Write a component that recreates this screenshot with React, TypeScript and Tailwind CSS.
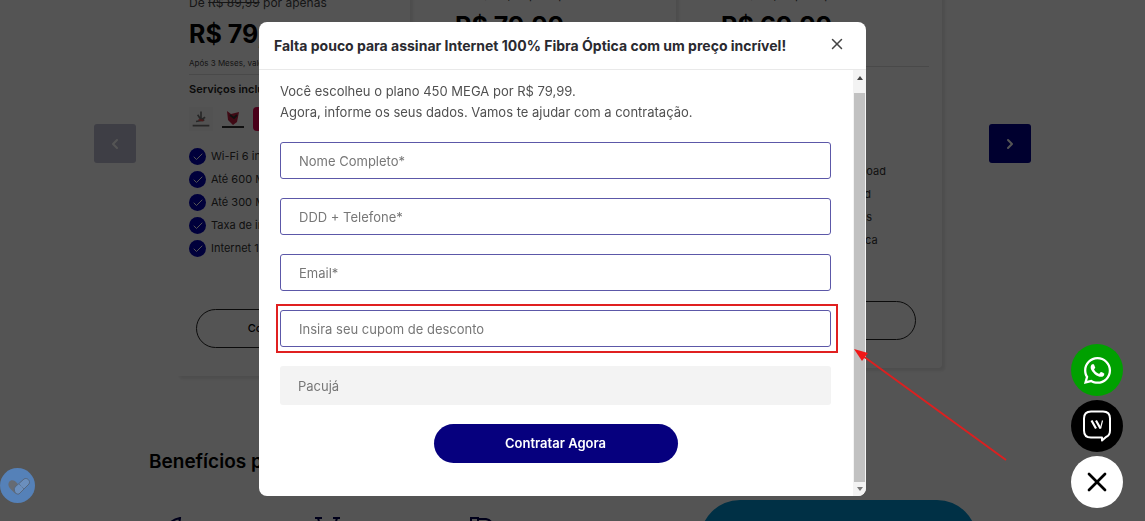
import clsx from "clsx";
import { Check, ChevronLeft, ChevronRight, X } from "lucide-react";
import { FaWhatsapp } from "react-icons/fa";

type Plan = {
  id: string;
  oldPrice: string;
  price: string;
  download: string;
  upload: string;
  featured?: boolean;
};

const plans: Plan[] = [
  { id: "450", oldPrice: "R$ 89,99", price: "R$ 79,99", download: "600", upload: "300", featured: true },
  { id: "600", oldPrice: "R$ 89,99", price: "R$ 79,99", download: "600", upload: "300" },
  { id: "700", oldPrice: "R$ 99,99", price: "R$ 69,99", download: "700", upload: "350" },
];

const fields = [
  { id: "nome", label: "Nome Completo*", type: "text" },
  { id: "telefone", label: "DDD + Telefone*", type: "tel" },
  { id: "email", label: "Email*", type: "email" },
  { id: "cupom", label: "Insira seu cupom de desconto", type: "text", highlighted: true },
];

const PlanCard = ({ plan }: { plan: Plan }) => {
  const benefits = [
    "Wi-Fi 6 incluso",
    `Até ${plan.download} Mega de download`,
    `Até ${plan.upload} Mega de upload`,
    "Taxa de instalação grátis",
    "Internet 100% fibra óptica",
  ];

  return (
    <article
      className={clsx(
        "w-[234px] shrink-0 rounded-sm bg-white px-[13px] pb-7 shadow-[3px_3px_3px_#e8e8e8]",
        !plan.featured && "-mt-2",
      )}
    >
      <p className="text-[12px] leading-[22px] whitespace-nowrap text-[#444]">
        De <s>{plan.oldPrice}</s> por apenas
      </p>
      <p className="text-[25px] leading-[40px] font-bold text-black">{plan.price}</p>
      <p className="text-[8px] leading-[18px] text-[#444]">Após 3 Meses, valor de R$ 99,99</p>
      <hr className="mt-[2px] border-[#ddd]" />
      <h3 className="text-[11px] leading-7 font-semibold text-[#222]">Serviços inclusos:</h3>
      <div className="mt-1 flex h-6 gap-2">
        <div className="flex w-6 items-center justify-center bg-[#f8f8f8]">
          <svg viewBox="0 0 24 24" className="size-5" fill="none" stroke="#777" strokeWidth="2">
            <path d="M12 3v10M8 7l4 6 5-3M6 15l10-2M2 20h20" />
            <path d="M9 13l6 1" stroke="#e05050" />
          </svg>
        </div>
        <div className="flex w-6 items-center justify-center">
          <svg viewBox="0 0 24 24" className="size-6">
            <path d="M6 4l4 3 8-2-2 10-4 3-5-5z" fill="#c02040" />
            <path d="M9 8l4 3 3-3M1 20h22" stroke="#333" strokeWidth="2" fill="none" />
          </svg>
        </div>
        <div className="w-6 rounded bg-[#e0004c]" />
      </div>
      <ul className="mt-[14px] flex flex-col">
        {benefits.map((benefit) => (
          <li key={benefit} className="flex h-[23px] items-center gap-[5px] text-[11px] whitespace-nowrap text-[#333]">
            <span className="flex size-[17px] shrink-0 items-center justify-center rounded-full bg-[#0000b4]">
              <Check className="size-3 text-white" strokeWidth={2} />
            </span>
            {benefit}
          </li>
        ))}
      </ul>
      <button
        type="button"
        className="mx-[7px] mt-[49px] h-[39px] w-[188px] rounded-full border border-[#222] text-[11px] font-medium text-black"
      >
        Contratar Agora
      </button>
    </article>
  );
};

const LeadModal = () => (
  <div
    role="dialog"
    aria-labelledby="modal-title"
    className="relative flex w-full max-w-[607px] flex-col self-start rounded-lg bg-white"
  >
    <header className="flex h-12 items-center justify-between border-b border-[#e9e9e9] pr-5 pl-[15px]">
      <h2 id="modal-title" className="text-[14px] leading-5 font-bold whitespace-nowrap text-[#2a2a30]">
        Falta pouco para assinar Internet 100% Fibra Óptica com um preço incrível!
      </h2>
      <button type="button" aria-label="Fechar" className="-mt-1">
        <X className="size-[18px] text-[#444]" strokeWidth={2} />
      </button>
    </header>
    <div className="flex">
      <form className="min-w-0 flex-1 pt-[11px] pr-[22px] pb-[33px] pl-[21px]">
        <p className="text-[13px] leading-[21px] text-[#505050]">
          Você escolheu o plano 450 MEGA por R$ 79,99.
          <br />
          Agora, informe os seus dados. Vamos te ajudar com a contratação.
        </p>
        <div className="mt-[19px] flex flex-col gap-[19px]">
          {fields.map((field) => (
            <div key={field.id} className="relative flex">
              <input
                id={field.id}
                type={field.type}
                aria-label={field.label}
                placeholder={field.label}
                className="h-[37px] w-full rounded-[3px] border border-[#5c58a8] px-[18px] text-[13px] placeholder:text-[#777]"
              />
              {field.highlighted && (
                <span className="pointer-events-none absolute -inset-y-[6px] -right-[7px] -left-1 border-2 border-[#e02020]" />
              )}
            </div>
          ))}
          <input
            aria-label="Cidade"
            value="Pacujá"
            readOnly
            className="h-[39px] w-full rounded-[3px] bg-[#f3f3f3] px-[18px] text-[13px] text-[#777]"
          />
        </div>
        <button
          type="submit"
          className="mx-auto mt-[19px] block h-[39px] w-[244px] rounded-full bg-[#06007e] text-[13px] font-semibold text-white"
        >
          Contratar Agora
        </button>
      </form>
      <div className="flex w-[13px] flex-col items-center rounded-br-lg bg-[#f3f3f3]" aria-hidden="true">
        <svg viewBox="0 0 6 4" className="mt-[6px] mb-[13px] h-1 w-[6px]">
          <path d="M0 4l3-4 3 4z" fill="#444" />
        </svg>
        <div className="w-[11px] flex-1 bg-[#c1c1c1]" />
        <svg viewBox="0 0 6 4" className="my-[5px] h-1 w-[6px]">
          <path d="M0 0l3 4 3-4z" fill="#777" />
        </svg>
      </div>
    </div>
    <svg
      viewBox="0 0 154 112"
      className="pointer-events-none absolute top-[327px] left-[595px] h-28 w-[154px]"
      aria-hidden="true"
    >
      <path d="M9 7l143 104" stroke="#dc2020" strokeWidth="2" />
      <path d="M0 0l14 4-6 8z" fill="#f01818" />
    </svg>
  </div>
);

const App = () => (
  <div className="relative flow-root min-h-screen overflow-hidden bg-white font-['Inter','Liberation_Sans',sans-serif]">
    <main className="h-screen overflow-hidden pr-5">
      <section className="mx-auto -mt-2 flex max-w-[937px] items-start gap-10">
        <button
          type="button"
          aria-label="Anterior"
          className="mt-[132px] flex h-[39px] w-[42px] shrink-0 items-center justify-center rounded-[3px] bg-[#bcbcd0]"
        >
          <ChevronLeft className="size-4 text-white" strokeWidth={3} />
        </button>
        <div className="flex items-start gap-8">
          {plans.map((plan) => (
            <PlanCard key={plan.id} plan={plan} />
          ))}
        </div>
        <button
          type="button"
          aria-label="Próximo"
          className="mt-[132px] ml-auto flex h-[39px] w-[42px] shrink-0 items-center justify-center rounded-[3px] bg-[#000090]"
        >
          <ChevronRight className="size-4 text-white" strokeWidth={3} />
        </button>
      </section>

      <section className="mx-auto mt-[70px] max-w-[827px]">
        <h2 className="text-[19px] leading-8 font-semibold text-black">Benefícios para você</h2>
        <div className="mt-[22px] flex items-start justify-between">
          <div className="flex gap-[122px] pt-[17px] pl-3 text-[#000050]">
            <svg viewBox="0 0 30 30" className="size-[30px]" fill="none" stroke="currentColor" strokeWidth="2">
              <path d="M4 12Q9 3 19 1l-1 8M11 5l3 5M5 12l10 10" />
            </svg>
            <svg viewBox="0 0 30 30" className="size-[30px]" fill="none" stroke="currentColor" strokeWidth="2">
              <path d="M2 1h7M20 1h7M5 1l2 7h15l2-7M7 8L3 24M22 8l4 16" />
            </svg>
            <svg viewBox="0 0 30 30" className="size-[30px]" fill="none" stroke="currentColor" strokeWidth="2">
              <path d="M6 1h7v5H6zM13 2h8q6 1 7 8M6 6v18h20V10" />
            </svg>
          </div>
          <div className="-mr-px h-40 w-[277px] rounded-[40px] bg-[#0092d0]" />
        </div>
      </section>
    </main>

    <div className="fixed inset-0 flex justify-center bg-black/67 pt-[22px] pr-5">
      <LeadModal />
    </div>

    <button
      type="button"
      aria-label="Preferências de cookies"
      className="fixed bottom-[18px] left-0 flex size-[35px] items-center justify-center rounded-full bg-[#5581b8]"
    >
      <svg viewBox="0 0 28 22" className="h-[22px] w-7" fill="none">
        <path d="M12 19C6 14 3 11 5 7c2-3 6-2 8 1l3 4-4 7z" fill="#666b73" />
        <path d="M11 12l9-8c3-2 7 2 5 5l-10 10c-3 1-6-3-4-7z" fill="#6b8fbd" stroke="#55677f" />
        <path d="M15 9l5 5" stroke="#55677f" strokeDasharray="1 1" />
      </svg>
    </button>

    <div className="fixed right-[22px] bottom-[13px] flex flex-col gap-1">
      <a
        href="#whatsapp"
        aria-label="WhatsApp"
        className="flex size-[52px] items-center justify-center rounded-full bg-[#00a000] text-white"
      >
        <FaWhatsapp className="size-[31px]" />
      </a>
      <a
        href="#chat"
        aria-label="Chat"
        className="flex size-[52px] items-center justify-center rounded-full bg-black"
      >
        <svg viewBox="0 0 30 34" className="h-[34px] w-[30px]" fill="none" stroke="white">
          <path
            d="M9 2.500h12q7 0 7 7v12q0 5-4 6.500l-4 3.500v-3H9q-7 0-7-7v-12q0-7 7-7z"
            strokeWidth="2"
            strokeLinejoin="round"
          />
          <path d="M9.500 11.500l4.500 8M14 11.500l4.500 8" strokeWidth="2.200" />
          <path d="M18.500 19.500l2-8" strokeWidth="1.200" />
        </svg>
      </a>
      <button
        type="button"
        aria-label="Fechar atendimento"
        className="flex size-[52px] items-center justify-center rounded-full bg-white text-black"
      >
        <X className="size-8" strokeWidth={2} />
      </button>
    </div>
  </div>
);

export default App;
